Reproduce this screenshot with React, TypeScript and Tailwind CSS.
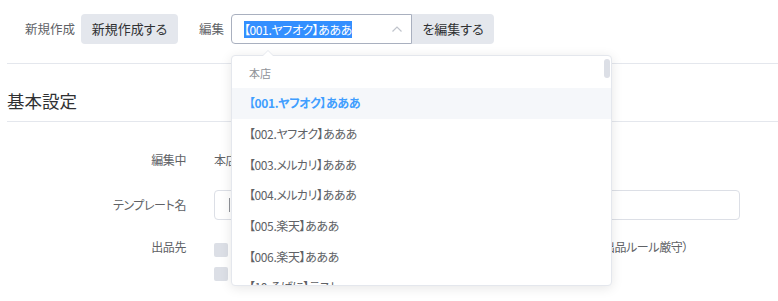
import React from "react";

const items = [
  "【001.ヤフオク】あああ",
  "【002.ヤフオク】あああ",
  "【003.メルカリ】あああ",
  "【004.メルカリ】あああ",
  "【005.楽天】あああ",
  "【006.楽天】あああ",
  "【10.そばに】テスト",
];

export default function App() {
  return (
    <div
      className="relative w-[778px] h-[301px] overflow-hidden bg-white text-[#606266] [font-feature-settings:'palt']"
      style={{ fontFamily: '"Noto Sans CJK JP", "Noto Sans", sans-serif' }}
    >
      {/* header */}
      <div className="ml-[7px] h-[64px] border-b border-[#e4e7ed] box-border flex items-start pt-[14px] pl-[18px]">
        <div className="flex items-center h-[30px]">
          <span className="w-[50px] text-[12.5px] text-[#606266] whitespace-nowrap">新規作成</span>
          <button className="ml-[6px] h-[30px] w-[97px] rounded-[4px] bg-[#e4e7ed] text-[13px] text-[#303133]">
            新規作成する
          </button>
          <span className="ml-[21px] w-[24px] text-[12.5px] text-[#606266] whitespace-nowrap">編集</span>
          <div className="ml-[8px] flex h-[30px]">
            <div className="relative w-[181px] h-[30px] border border-[#a9b0bf] rounded-l-[4px] box-border flex items-center pl-[12px]">
              <span className="bg-[#338fff] text-white text-[12px] tracking-[-0.4px] leading-[17px]">【001.ヤフオク】あああ</span>
              <svg className="absolute right-[8px] top-[10px]" width="12" height="8" viewBox="0 0 12 8">
                <path d="M1.5 6.5 L6 2 L10.5 6.5" fill="none" stroke="#c0c4cc" strokeWidth="1.2" />
              </svg>
            </div>
            <button className="w-[82px] h-[30px] bg-[#e4e7ed] rounded-r-[4px] text-[13px] text-[#303133]">
              を編集する
            </button>
          </div>
        </div>
      </div>

      {/* section title */}
      <div className="ml-[7px] h-[58px] border-b border-[#e4e7ed] box-border pt-[25px]">
        <div className="text-[17.5px] leading-[24px] text-[#303133]">基本設定</div>
      </div>

      {/* form */}
      <div className="ml-[7px] pt-[23px] tracking-[-0.4px]">
        <div className="flex items-center h-[30px]">
          <div className="w-[179px] text-right text-[12px]">編集中</div>
          <div className="ml-[28px] text-[12px]">本店</div>
        </div>
        <div className="flex items-center h-[30px] mt-[15px]">
          <div className="w-[179px] text-right text-[12px]">テンプレート名</div>
          <div className="ml-[28px] w-[526px] h-[30px] border border-[#dcdfe6] rounded-[4px] box-border flex items-center pl-[14px]">
            <div className="w-px h-[14px] bg-[#909399]" />
          </div>
        </div>
        <div className="flex items-start mt-[17px]">
          <div className="w-[179px] text-right text-[12px] leading-[20px]">出品先</div>
          <div className="ml-[28px] flex flex-col">
            <div className="flex items-start">
              <div className="mt-[6px] w-[14px] h-[14px] rounded-[2px] bg-[#dcdfe6]" />
              <span className="w-[460px] text-right text-[12px] leading-[20px] whitespace-nowrap">
                ヤフオク・メルカリ・楽天（出品ルール厳守）
              </span>
            </div>
            <div className="mt-[10px] w-[14px] h-[14px] rounded-[2px] bg-[#dcdfe6]" />
          </div>
        </div>
      </div>

      {/* dropdown */}
      <div className="absolute left-[231px] top-[55px] w-[381px] h-[231px] bg-white border border-[#e4e7ed] rounded-[4px] shadow-[0_2px_12px_rgba(0,0,0,0.1)] box-border">
        <div className="absolute -top-[6px] left-[30px] w-0 h-0 border-l-[6px] border-r-[6px] border-b-[6px] border-l-transparent border-r-transparent border-b-[#e4e7ed]" />
        <div className="absolute -top-[5px] left-[31px] w-0 h-0 border-l-[5px] border-r-[5px] border-b-[5px] border-l-transparent border-r-transparent border-b-white" />
        <div className="h-full overflow-hidden rounded-[4px]">
          <div className="pt-[3px]">
            <div className="h-[29px] flex items-center pl-[17px] text-[11px] text-[#909399]">本店</div>
            {items.map((t, i) => (
              <div
                key={t}
                className={
                  i === 0
                    ? "h-[30.7px] flex items-center pl-[17px] text-[12px] tracking-[-0.4px] bg-[#f5f7fa] text-[#409eff] font-bold"
                    : "h-[30.7px] flex items-center pl-[17px] text-[12px] tracking-[-0.4px] text-[#606266]"
                }
              >
                {t}
              </div>
            ))}
          </div>
        </div>
        <div className="absolute right-[1px] top-[3px] w-[6px] h-[19px] rounded-[3px] bg-[#dcdfe6]" />
      </div>
    </div>
  );
}
